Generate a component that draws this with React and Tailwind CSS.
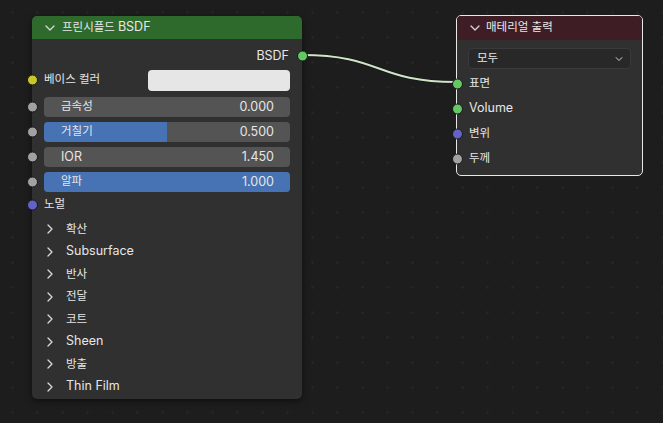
import React from "react";

const FONT = "font-['Inter','Noto_Sans_CJK_KR',sans-serif]";

function Socket({ color, side = "left" }) {
  return (
    <span
      className={`absolute top-1/2 -translate-y-1/2 w-[11px] h-[11px] rounded-full border border-[#1a1a1a] ${color} ${
        side === "left" ? "left-[-5.5px]" : "right-[-5.5px]"
      }`}
    />
  );
}

function ChevronDown({ className = "" }) {
  return (
    <svg width="10" height="6" viewBox="0 0 10 6" className={className}>
      <path d="M1 1 L5 5 L9 1" fill="none" stroke="#d8d8d8" strokeWidth="1.3" strokeLinecap="round" strokeLinejoin="round" />
    </svg>
  );
}

function ChevronRight() {
  return (
    <svg width="6" height="10" viewBox="0 0 6 10">
      <path d="M1 1 L5 5 L1 9" fill="none" stroke="#d8d8d8" strokeWidth="1.3" strokeLinecap="round" strokeLinejoin="round" />
    </svg>
  );
}

function Slider({ label, value, fill, latin }) {
  return (
    <div className="relative h-[20px] flex items-center">
      <Socket color="bg-[#a1a1a1]" />
      <div className="relative ml-[12px] mr-[12px] flex-1 h-[20px] rounded-[4px] bg-[#545454] overflow-hidden flex items-center justify-between pl-[17px] pr-[16px]">
        <div className="absolute left-0 top-0 bottom-0 bg-[#4772b3]" style={{ width: `${fill * 100}%` }} />
        <span className={`relative text-[#e6e6e6] ${latin ? "text-[12.5px]" : "text-[11.5px]"}`}>{label}</span>
        <span className="relative text-[#e6e6e6] text-[12.5px]">{value}</span>
      </div>
    </div>
  );
}

function Panel({ label, latin }) {
  return (
    <div className="h-[22.5px] flex items-center pl-[15px]">
      <ChevronRight />
      <span className={`ml-[13px] text-[#e6e6e6] ${latin ? "text-[12.5px]" : "text-[11.5px]"}`}>{label}</span>
    </div>
  );
}

export default function App() {
  return (
    <div
      className={`relative w-[663px] h-[423px] overflow-hidden bg-[#1d1d1d] bg-[radial-gradient(circle,#262626_1px,transparent_1.5px)] bg-[length:25px_25px] ${FONT}`}
    >
      {/* link */}
      <svg className="absolute inset-0" width="663" height="423">
        <path d="M302 55 C 382 55, 376 82, 456 82" fill="none" stroke="#101010" strokeWidth="3.5" opacity="0.5" />
        <path d="M302 55 C 382 55, 376 82, 456 82" fill="none" stroke="#cfe5c8" strokeWidth="2" />
      </svg>

      {/* Principled BSDF node */}
      <div className="absolute left-[32px] top-[16px] w-[270px] h-[383px] rounded-[5px] bg-[#303030] shadow-[0_2px_6px_rgba(0,0,0,0.5)] flex flex-col">
        <div className="h-[23px] rounded-t-[5px] bg-[#2d6a2c] flex items-center pl-[13px]">
          <ChevronDown />
          <span className="ml-[7px] text-[#e8e8e8] flex items-baseline">
            <span className="text-[11.5px]">프린시플드</span>
            <span className="text-[12.5px] ml-[3px]">BSDF</span>
          </span>
        </div>

        <div className="relative mt-[6px] h-[22px] flex items-center justify-end pr-[13px]">
          <span className="text-[12.5px] text-[#e6e6e6]">BSDF</span>
          <Socket color="bg-[#63c763]" side="right" />
        </div>

        <div className="relative h-[26px] flex items-center pl-[12px] pr-[12px]">
          <Socket color="bg-[#c7c729]" />
          <span className="text-[11.5px] text-[#e6e6e6]">베이스 컬러</span>
          <div className="ml-auto w-[142px] h-[21px] rounded-[4px] bg-[#e6e6e6]" />
        </div>

        <div className="mt-[4px] flex flex-col gap-[5px]">
          <Slider label="금속성" value="0.000" fill={0} />
          <Slider label="거칠기" value="0.500" fill={0.5} />
          <Slider label="IOR" value="1.450" fill={0} latin />
          <Slider label="알파" value="1.000" fill={1} />
        </div>

        <div className="relative mt-[1px] h-[24px] flex items-center pl-[12px]">
          <Socket color="bg-[#6363c7]" />
          <span className="text-[11.5px] text-[#e6e6e6]">노멀</span>
        </div>

        <div className="mt-[1px] flex flex-col">
          <Panel label="확산" />
          <Panel label="Subsurface" latin />
          <Panel label="반사" />
          <Panel label="전달" />
          <Panel label="코트" />
          <Panel label="Sheen" latin />
          <Panel label="방출" />
          <Panel label="Thin Film" latin />
        </div>
      </div>

      {/* Material Output node */}
      <div className="absolute left-[456px] top-[15px] w-[187px] h-[161px] rounded-[5px] bg-[#303030] border border-[#e8e8e8] flex flex-col">
        <div className="h-[24px] rounded-t-[4px] bg-[#3e1d25] flex items-center pl-[13px]">
          <ChevronDown />
          <span className="ml-[6px] text-[11.5px] text-[#e8e8e8]">매테리얼 출력</span>
        </div>

        <div className="mx-[11px] mt-[8px] h-[21px] rounded-[4px] bg-[#282828] border border-[#3a3a3a] flex items-center justify-between pl-[8px] pr-[6px]">
          <span className="text-[11.5px] text-[#e6e6e6]">모두</span>
          <ChevronDown className="scale-75" />
        </div>

        <div className="mt-[2px] flex flex-col">
          <div className="relative h-[25px] flex items-center pl-[12px]">
            <Socket color="bg-[#63c763]" />
            <span className="text-[11.5px] text-[#e6e6e6]">표면</span>
          </div>
          <div className="relative h-[25px] flex items-center pl-[12px]">
            <Socket color="bg-[#63c763]" />
            <span className="text-[12.5px] text-[#e6e6e6]">Volume</span>
          </div>
          <div className="relative h-[25px] flex items-center pl-[12px]">
            <Socket color="bg-[#6363c7]" />
            <span className="text-[11.5px] text-[#e6e6e6]">변위</span>
          </div>
          <div className="relative h-[25px] flex items-center pl-[12px]">
            <Socket color="bg-[#a1a1a1]" />
            <span className="text-[11.5px] text-[#e6e6e6]">두께</span>
          </div>
        </div>
      </div>
    </div>
  );
}
